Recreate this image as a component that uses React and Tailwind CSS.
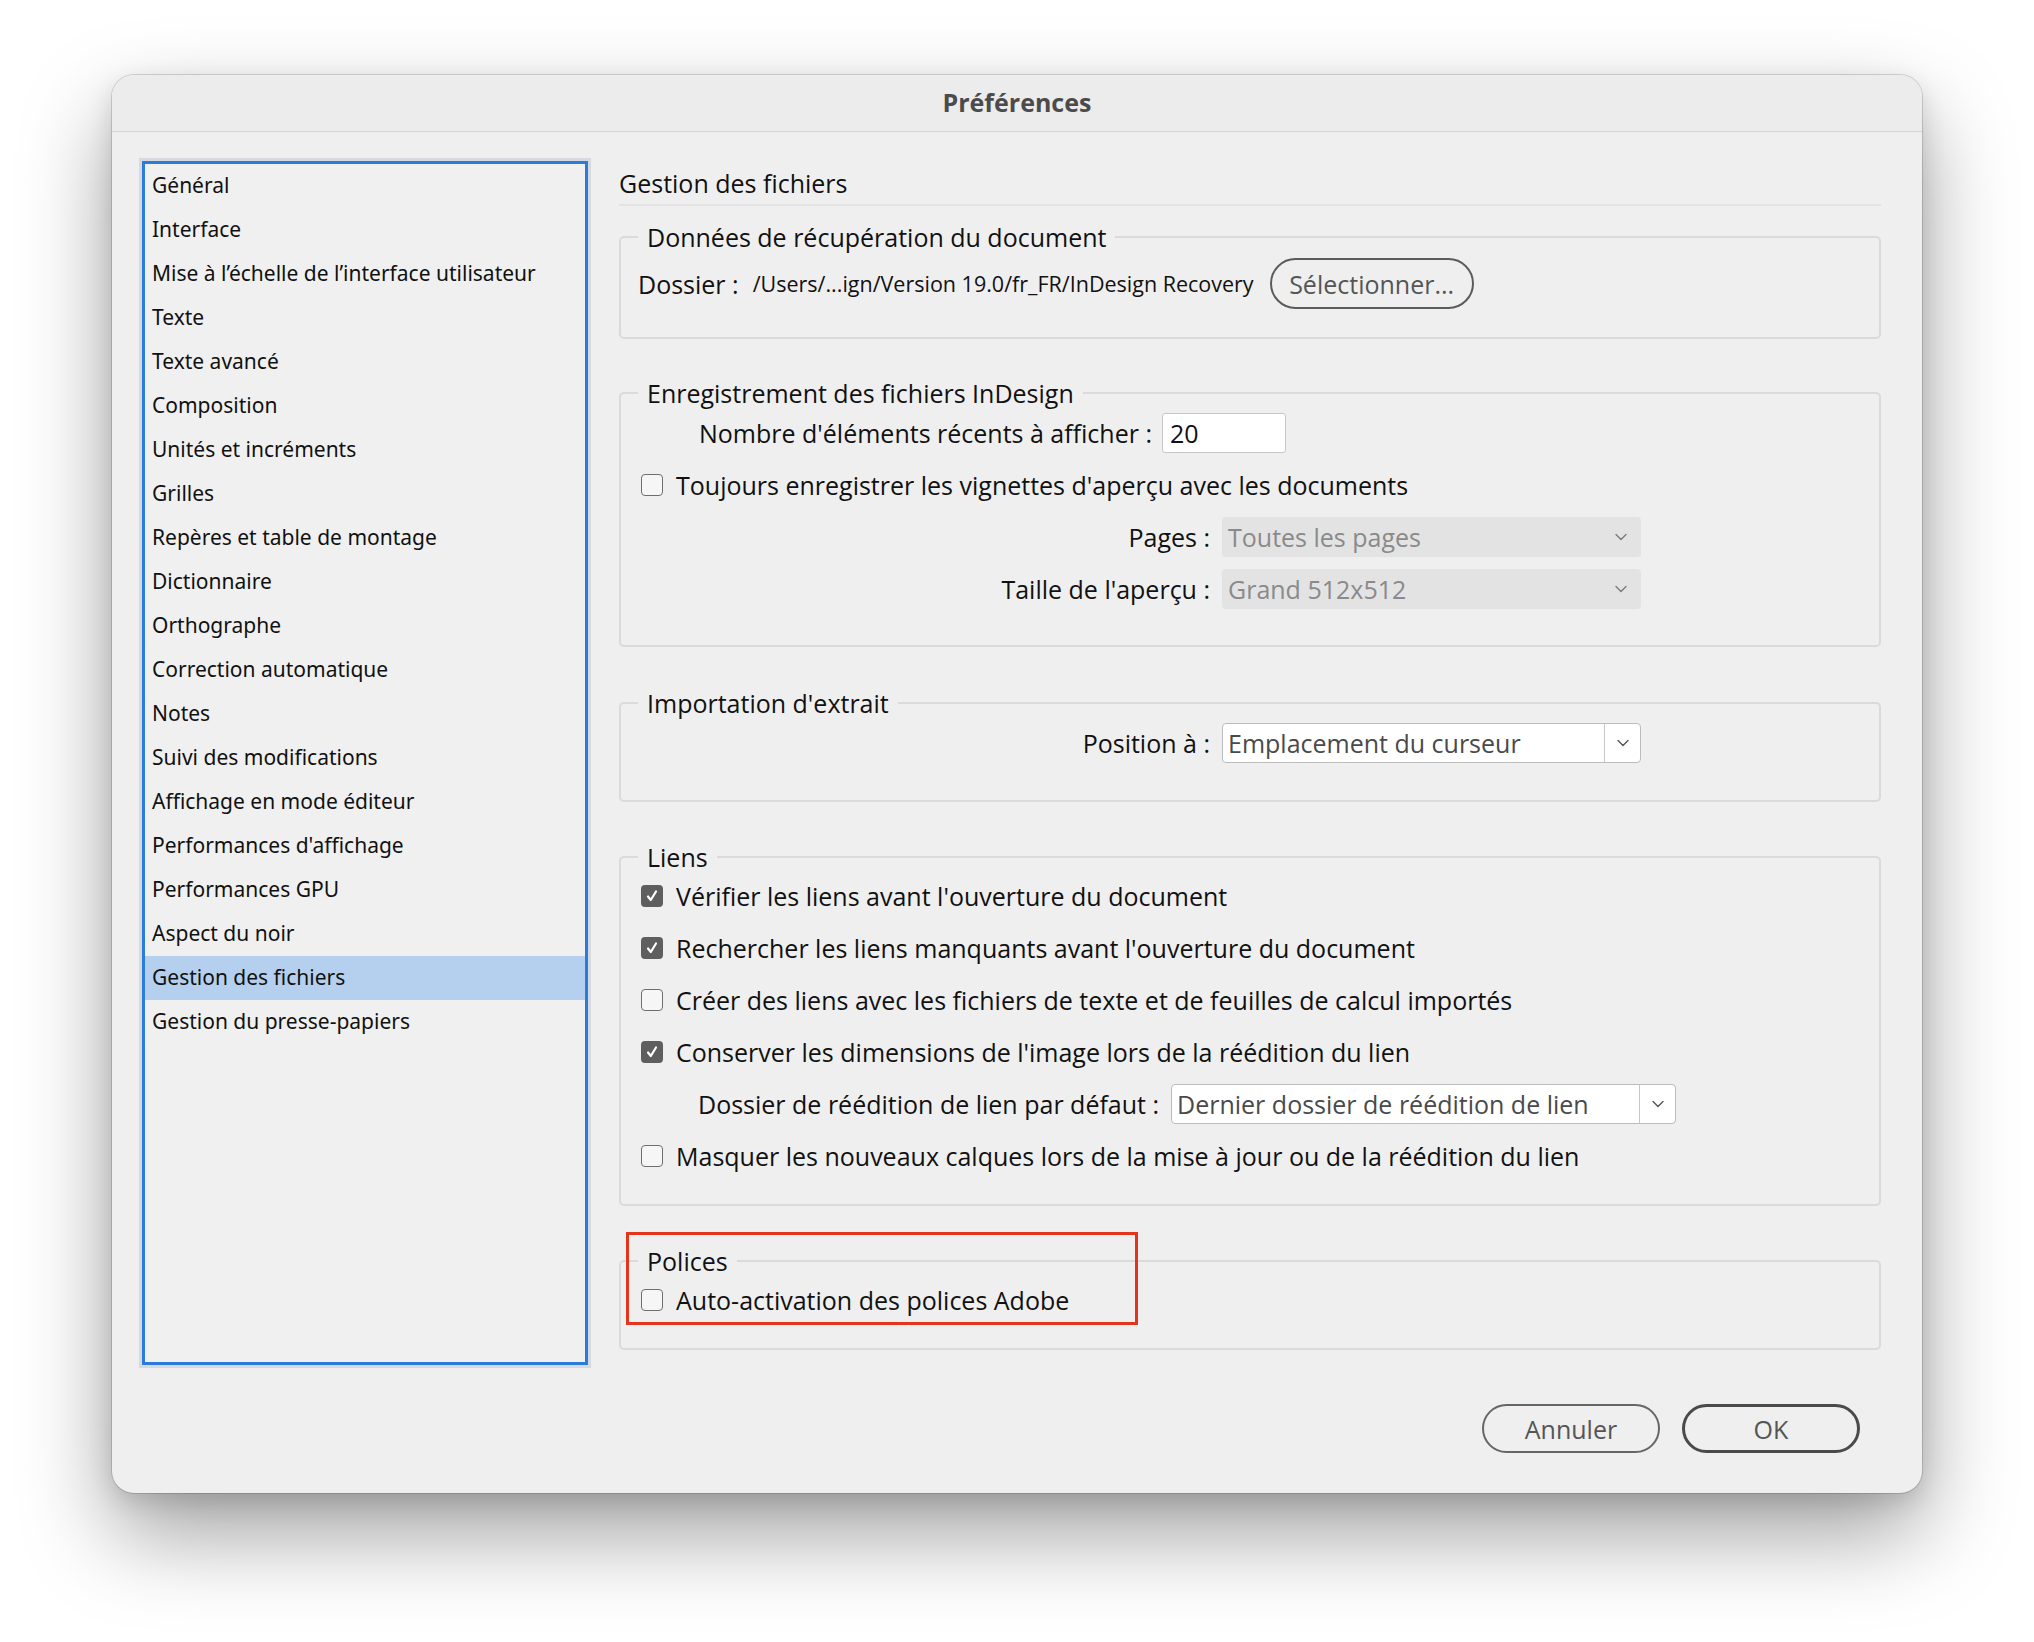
import React from 'react';

// ── Données du panneau latéral ────────────────────────────────────────────
const NAV = [
  'Général',
  'Interface',
  'Mise à l’échelle de l’interface utilisateur',
  'Texte',
  'Texte avancé',
  'Composition',
  'Unités et incréments',
  'Grilles',
  'Repères et table de montage',
  'Dictionnaire',
  'Orthographe',
  'Correction automatique',
  'Notes',
  'Suivi des modifications',
  'Affichage en mode éditeur',
  "Performances d'affichage",
  'Performances GPU',
  'Aspect du noir',
  'Gestion des fichiers',
  'Gestion du presse-papiers',
];

const Chevron = ({ color = '#666' }) => (
  <svg width="14" height="8" viewBox="0 0 14 8" fill="none">
    <path d="M2 1.5L7 6.5L12 1.5" stroke={color} strokeWidth="1.4" strokeLinecap="round" strokeLinejoin="round" />
  </svg>
);

const Checkbox = ({ checked }) =>
  checked ? (
    <span className="w-[22px] h-[22px] shrink-0 rounded-[4px] bg-[#5e5e5e] flex items-center justify-center">
      <svg width="16" height="16" viewBox="0 0 16 16" fill="none">
        <path d="M4 8.5L6.8 12L12 3.5" stroke="#fff" strokeWidth="2.2" strokeLinecap="round" strokeLinejoin="round" />
      </svg>
    </span>
  ) : (
    <span className="w-[22px] h-[22px] shrink-0 rounded-[4px] border-[1.5px] border-[#6e6e6e] bg-[#f6f6f6]" />
  );

const CheckRow = ({ checked, label }) => (
  <div className="flex items-center h-[40px] pl-[3px]">
    <Checkbox checked={checked} />
    <span className="ml-[13px]">{label}</span>
  </div>
);

// ── Groupe avec légende ───────────────────────────────────────────────────
const Group = ({ title, className = '', children }) => (
  <fieldset className={`border-2 border-[#dadada] rounded-[5px] px-[17px] ${className}`}>
    <legend className="px-[9px] leading-[30px] text-[25px] text-[#111]">{title}</legend>
    {children}
  </fieldset>
);

const DisabledSelect = ({ value }) => (
  <div className="ml-[12px] w-[419px] h-[40px] rounded-[4px] bg-[#e3e3e3] flex items-center justify-between pl-[6px] pr-[13px]">
    <span className="text-[#8a8a8a]">{value}</span>
    <Chevron color="#7a7a7a" />
  </div>
);

const Select = ({ value, width }) => (
  <div className={`ml-[12px] ${width} h-[40px] rounded-[4px] bg-white border-[1.5px] border-[#bcbcbc] flex items-center`}>
    <span className="flex-1 pl-[5px] text-[#4a4a4a] whitespace-nowrap">{value}</span>
    <span className="w-[36px] h-full border-l-[1.5px] border-[#c8c8c8] flex items-center justify-center">
      <Chevron color="#555" />
    </span>
  </div>
);

export default function App() {
  return (
    <div className="min-h-[1642px] bg-white pt-[75px] flex justify-center">
      <div className="w-[1810px] h-[1418px] rounded-[22px] bg-[#efefef] overflow-hidden flex flex-col shadow-[0_0_0_1px_rgba(0,0,0,0.14),0_40px_90px_rgba(0,0,0,0.38),0_8px_24px_rgba(0,0,0,0.12)]">
        {/* ── Barre de titre ── */}
        <div className="h-[57px] shrink-0 bg-[#ececec] border-b border-[#d5d5d5] flex items-center justify-center font-['Open_Sans',sans-serif] text-[25px] font-bold text-[#4b4b4b]">
          Préférences
        </div>

        <div className="flex pl-[30px] pr-[41px] pt-[29px]">
          {/* ── Liste des catégories ── */}
          <div className="w-[446px] h-[1204px] shrink-0 border-[3px] border-[#2b7bd9] shadow-[0_0_0_3px_#d6dae0] bg-[#f0f0f0] font-['Noto_Sans',sans-serif] text-[21px] text-[#111]">
            {NAV.map((item) => (
              <div
                key={item}
                className={`h-[44px] flex items-center pl-[7px] ${item === 'Gestion des fichiers' ? 'bg-[#b5d0ee]' : ''}`}
              >
                {item}
              </div>
            ))}
          </div>

          {/* ── Panneau de droite ── */}
          <div className="ml-[31px] flex-1 flex flex-col font-['Open_Sans',sans-serif] text-[25px] leading-[30px] text-[#111]">
            <div className="h-[45px] flex items-center border-b-2 border-[#e3e3e3]">Gestion des fichiers</div>

            <Group title="Données de récupération du document" className="mt-[16px] pt-[6px] pb-[28px]">
              <div className="flex items-center h-[51px]">
                <span>Dossier :</span>
                <span className="ml-[14px] text-[21.5px]">/Users/...ign/Version 19.0/fr_FR/InDesign Recovery</span>
                <button className="ml-[16px] w-[204px] h-[51px] rounded-full border-2 border-[#5b5b5b] text-[#555]">
                  Sélectionner...
                </button>
              </div>
            </Group>

            <Group title="Enregistrement des fichiers InDesign" className="mt-[39px] pt-[5px] pb-[36px]">
              <div className="flex flex-col gap-[12px]">
                <div className="flex items-center h-[40px]">
                  <span className="ml-[61px]">Nombre d'éléments récents à afficher :</span>
                  <div className="ml-[10px] w-[124px] h-[40px] bg-white border-[1.5px] border-[#c6c6c6] rounded-[3px] flex items-center pl-[7px]">
                    20
                  </div>
                </div>
                <CheckRow label="Toujours enregistrer les vignettes d'aperçu avec les documents" />
                <div className="flex items-center h-[40px]">
                  <span className="w-[572px] text-right">Pages :</span>
                  <DisabledSelect value="Toutes les pages" />
                </div>
                <div className="flex items-center h-[40px]">
                  <span className="w-[572px] text-right">Taille de l'aperçu :</span>
                  <DisabledSelect value="Grand 512x512" />
                </div>
              </div>
            </Group>

            <Group title="Importation d'extrait" className="mt-[41px] pt-[4px] pb-[37px]">
              <div className="flex items-center h-[41px]">
                <span className="w-[572px] text-right">Position à :</span>
                <Select value="Emplacement du curseur" width="w-[419px]" />
              </div>
            </Group>

            <Group title="Liens" className="mt-[40px] pt-[4px] pb-[28px]">
              <div className="flex flex-col gap-[12px]">
                <CheckRow checked label="Vérifier les liens avant l'ouverture du document" />
                <CheckRow checked label="Rechercher les liens manquants avant l'ouverture du document" />
                <CheckRow label="Créer des liens avec les fichiers de texte et de feuilles de calcul importés" />
                <CheckRow checked label="Conserver les dimensions de l'image lors de la réédition du lien" />
                <div className="flex items-center h-[40px]">
                  <span className="ml-[60px]">Dossier de réédition de lien par défaut :</span>
                  <Select value="Dernier dossier de réédition de lien" width="w-[505px]" />
                </div>
                <CheckRow label="Masquer les nouveaux calques lors de la mise à jour ou de la réédition du lien" />
              </div>
            </Group>

            <div className="relative mt-[40px]">
              <Group title="Polices" className="pt-[4px] pb-[28px]">
                <CheckRow label="Auto-activation des polices Adobe" />
              </Group>
              <div className="absolute left-[7px] top-[-14px] w-[512px] h-[93px] border-[3px] border-[#e4341c]" />
            </div>

            <div className="mt-[54px] flex justify-end gap-[22px] pr-[21px]">
              <button className="w-[178px] h-[49px] rounded-full border-2 border-[#666] text-[#555]">Annuler</button>
              <button className="w-[178px] h-[49px] rounded-full border-[3px] border-[#4a4a4a] text-[#555]">OK</button>
            </div>
          </div>
        </div>
      </div>
    </div>
  );
}
